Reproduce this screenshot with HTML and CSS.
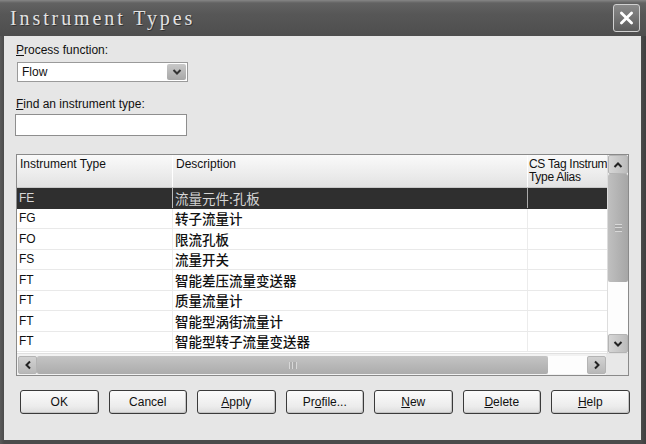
FILE: index.html
```html
<!DOCTYPE html>
<html>
<head>
<meta charset="utf-8">
<link rel="stylesheet" href="styles.css">
</head>
<body>
<div class="window">
  <div class="titlebar">
    <span class="title">Instrument Types</span>
    <div class="close"><svg width="27" height="27" viewBox="0 0 27 27"><path d="M8 8 L19 19 M19 8 L8 19" stroke="#fff" stroke-width="3" stroke-linecap="round"/></svg></div>
  </div>
  <div class="client">
    <div class="lbl"><u>P</u>rocess function:</div>
    <div class="combo">
      <span class="combo-text">Flow</span>
      <span class="drop"><svg width="10" height="8" viewBox="0 0 10 8"><path d="M1.5 2 L5 5.5 L8.5 2" fill="none" stroke="#333" stroke-width="2"/></svg></span>
    </div>
    <div class="lbl lbl2"><u>F</u>ind an instrument type:</div>
    <div class="textbox"></div>
    <div class="list">
      <div class="list-main">
        <div class="grid">
          <div class="row head">
            <div class="c1">Instrument Type</div>
            <div class="c2">Description</div>
            <div class="c3"><span class="nowrap">CS Tag Instrum</span><br>Type Alias</div>
          </div>
          <div class="row sel"><div class="c1">FE</div><div class="c2 cjk">流量元件:孔板</div><div class="c3"></div></div>
          <div class="row"><div class="c1">FG</div><div class="c2 cjk">转子流量计</div><div class="c3"></div></div>
          <div class="row"><div class="c1">FO</div><div class="c2 cjk">限流孔板</div><div class="c3"></div></div>
          <div class="row"><div class="c1">FS</div><div class="c2 cjk">流量开关</div><div class="c3"></div></div>
          <div class="row"><div class="c1">FT</div><div class="c2 cjk">智能差压流量变送器</div><div class="c3"></div></div>
          <div class="row"><div class="c1">FT</div><div class="c2 cjk">质量流量计</div><div class="c3"></div></div>
          <div class="row"><div class="c1">FT</div><div class="c2 cjk">智能型涡街流量计</div><div class="c3"></div></div>
          <div class="row"><div class="c1">FT</div><div class="c2 cjk">智能型转子流量变送器</div><div class="c3"></div></div>
        </div>
        <div class="vscroll">
          <div class="sbtn"><svg width="10" height="8" viewBox="0 0 10 8"><path d="M1.5 6 L5 2.5 L8.5 6" fill="none" stroke="#222" stroke-width="2"/></svg></div>
          <div class="vthumb"><span class="grip-v"></span></div>
          <div class="vtrack"></div>
          <div class="sbtn"><svg width="10" height="8" viewBox="0 0 10 8"><path d="M1.5 2 L5 5.5 L8.5 2" fill="none" stroke="#222" stroke-width="2"/></svg></div>
        </div>
      </div>
      <div class="list-bottom">
        <div class="hscroll">
          <div class="hbtn"><svg width="8" height="10" viewBox="0 0 8 10"><path d="M6 1.5 L2.5 5 L6 8.5" fill="none" stroke="#222" stroke-width="2"/></svg></div>
          <div class="hthumb"><span class="grip-h"></span></div>
          <div class="htrack"></div>
          <div class="hbtn"><svg width="8" height="10" viewBox="0 0 8 10"><path d="M2 1.5 L5.5 5 L2 8.5" fill="none" stroke="#222" stroke-width="2"/></svg></div>
        </div>
        <div class="corner"></div>
      </div>
    </div>
    <div class="buttons">
      <div class="btn">OK</div>
      <div class="btn">Cancel</div>
      <div class="btn"><u>A</u>pply</div>
      <div class="btn">Pr<u>o</u>file...</div>
      <div class="btn"><u>N</u>ew</div>
      <div class="btn"><u>D</u>elete</div>
      <div class="btn"><u>H</u>elp</div>
    </div>
  </div>
</div>
</body>
</html>
```
FILE: styles.css
```css
html, body {
  margin: 0;
  padding: 0;
}
body {
  width: 646px;
  height: 444px;
  overflow: hidden;
  font-family: "Liberation Sans", Arial, sans-serif;
  font-size: 12px;
  color: #111;
  background: #4b4b4b;
}
.window {
  width: 646px;
  height: 444px;
  display: flex;
  flex-direction: column;
  background: linear-gradient(90deg, #5a5a5a 0, #4b4b4b 4px, #4b4b4b 641px, #3e3e3e 646px);
}
.titlebar {
  height: 36px;
  flex: none;
  display: flex;
  align-items: center;
  background: linear-gradient(#868686 0, #626262 3px, #575757 14px, #4e4e4e 36px);
}
.title {
  font-family: "Liberation Serif", "Times New Roman", serif;
  font-size: 20px;
  color: #e2e2e2;
  padding-left: 10px;
  letter-spacing: 2.9px;
  text-shadow: 1px 1px 0 #333;
  padding-top: 1px;
}
.close {
  margin-left: auto;
  margin-right: 6px;
  width: 25px;
  height: 26px;
  border: 1px solid #d0d0d0;
  border-radius: 3px;
  background: linear-gradient(#8a8a8a, #5c5c5c);
  display: flex;
  align-items: center;
  justify-content: center;
}
.close svg {
  width: 25px;
  height: 26px;
}
.client {
  flex: 1;
  margin: 0 5px 4px 4px;
  background: #e6e6e6;
  padding: 7px 0 0 12px;
  display: flex;
  flex-direction: column;
  align-items: flex-start;
}
.lbl {
  line-height: 14px;
}
.lbl2 {
  margin-top: 15px;
}
.combo {
  margin-top: 5px;
  margin-left: 1px;
  width: 169px;
  height: 18px;
  border: 1px solid #9a9a9a;
  background: #fff;
  display: flex;
  align-items: center;
}
.combo-text {
  padding-left: 4px;
  flex: 1;
}
.drop {
  width: 19px;
  height: 16px;
  margin-right: 1px;
  background: linear-gradient(#c8c8c8, #a8a8a8);
  border-radius: 2px;
  display: flex;
  align-items: center;
  justify-content: center;
}
.textbox {
  margin-top: 3px;
  margin-left: -1px;
  width: 170px;
  height: 20px;
  border: 1px solid #8e8e8e;
  background: #fff;
}
.list {
  margin-top: 18px;
  width: 611px;
  height: 220px;
  border: 1px solid #8a8a8a;
  background: #fff;
  display: flex;
  flex-direction: column;
}
.list-main {
  height: 198px;
  display: flex;
}
.grid {
  width: 590px;
  display: flex;
  flex-direction: column;
  overflow: hidden;
}
.row {
  display: flex;
  height: 20.5px;
  box-sizing: border-box;
  border-bottom: 1px solid #e9e9e9;
  flex: none;
}
.row > div {
  padding-left: 2px;
  box-sizing: border-box;
  white-space: nowrap;
  overflow: hidden;
  display: flex;
  align-items: center;
  line-height: 16px;
}
.c1 { width: 155px; }
.c2 { width: 355px; border-left: 1px solid #ececec; }
.c3 { width: 80px; border-left: 1px solid #ececec; }
.row.head {
  height: 33px;
  background: linear-gradient(#fafafa, #ececec 60%, #e2e2e2);
  border-bottom: 1px solid #c8c8c8;
}
.row.head > div {
  display: block;
  padding-top: 3px;
  padding-left: 3px;
  line-height: 13px;
}
.row.head .c2, .row.head .c3 {
  border-left: 1px solid #fff;
}
.row.head .c3 {
  padding-left: 1px;
  letter-spacing: -0.3px;
}
.nowrap { white-space: nowrap; }
.cjk {
  font-family: "Noto Sans CJK SC", "Liberation Sans", sans-serif;
  font-size: 13.5px;
  font-weight: 500;
}
.row.sel {
  background: #2f2f2f;
  color: #d6d6d6;
  border-bottom-color: #2f2f2f;
}
.row.sel .cjk { font-weight: 400; }
.row.sel .c2 { border-left-color: #bbb; }
.row.sel .c3 { border-left-color: #aaa; }
.vscroll {
  width: 20px;
  display: flex;
  flex-direction: column;
  background: #f6f6f6;
  border-left: 1px solid #ddd;
}
.sbtn {
  height: 19px;
  flex: none;
  background: linear-gradient(90deg, #d6d6d6, #bcbcbc);
  border: 1px solid #b4b4b4;
  border-radius: 2px;
  box-sizing: border-box;
  display: flex;
  align-items: center;
  justify-content: center;
}
.vthumb {
  height: 108px;
  flex: none;
  background: linear-gradient(90deg, #c0c0c0, #a6a6a6);
  border-radius: 2px;
  display: flex;
  align-items: center;
  justify-content: center;
}
.grip-v {
  width: 7px;
  height: 6px;
  border-top: 1px solid #d8d8d8;
  border-bottom: 1px solid #d8d8d8;
  background: linear-gradient(#a6a6a6 2px, #d8d8d8 2px, #d8d8d8 3px, #a6a6a6 3px);
}
.vtrack {
  flex: 1;
  background: #fdfdfd;
}
.list-bottom {
  height: 22px;
  display: flex;
  background: #f2f2f2;
  border-top: 1px solid #e0e0e0;
  box-sizing: border-box;
}
.hscroll {
  width: 588px;
  display: flex;
  padding: 2px 0 1px 1px;
}
.hbtn {
  width: 19px;
  flex: none;
  background: linear-gradient(#d2d2d2, #b8b8b8);
  border: 1px solid #b4b4b4;
  border-radius: 2px;
  box-sizing: border-box;
  display: flex;
  align-items: center;
  justify-content: center;
}
.hthumb {
  width: 511px;
  flex: none;
  background: linear-gradient(#c4c4c4, #acacac);
  border-radius: 2px;
  display: flex;
  align-items: center;
  justify-content: center;
}
.grip-h {
  width: 6px;
  height: 7px;
  border-left: 1px solid #d8d8d8;
  border-right: 1px solid #d8d8d8;
  background: linear-gradient(90deg, #acacac 2px, #d8d8d8 2px, #d8d8d8 3px, #acacac 3px);
}
.htrack {
  flex: 1;
  background: #fdfdfd;
}
.corner {
  flex: 1;
  background: #e8e8e8;
}
.buttons {
  margin-top: 14px;
  margin-left: 4px;
  display: flex;
  gap: 10px;
}
.btn {
  width: 78.5px;
  height: 24px;
  box-sizing: border-box;
  border: 1px solid #3a3a3a;
  border-radius: 3px;
  background: linear-gradient(#fbfbfb, #ececec 70%, #dcdcdc);
  box-shadow: inset -1px -1px 0 #c4c4c4;
  display: flex;
  align-items: center;
  justify-content: center;
  font-size: 12px;
}
```
